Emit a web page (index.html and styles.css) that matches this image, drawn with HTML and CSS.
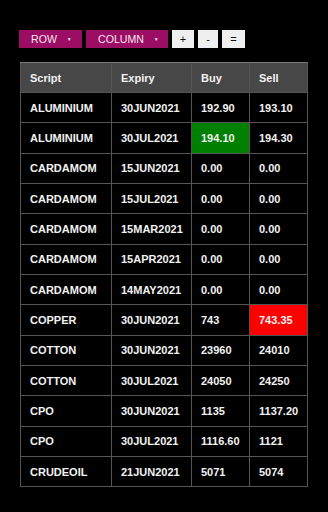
FILE: index.html
```html
<!DOCTYPE html>
<html>
<head>
<meta charset="utf-8">
<link rel="stylesheet" href="styles.css">
</head>
<body>
<div class="page">
  <div class="toolbar">
    <button class="btn btn-menu btn-row">ROW <span class="caret">&#9660;</span></button>
    <button class="btn btn-menu btn-col">COLUMN <span class="caret">&#9660;</span></button>
    <button class="btn btn-small btn-plus">+</button>
    <button class="btn btn-small btn-minus">-</button>
    <button class="btn btn-small btn-eq">=</button>
  </div>
  <table class="grid">
    <colgroup>
      <col class="c1"><col class="c2"><col class="c3"><col class="c4">
    </colgroup>
    <thead>
      <tr><th>Script</th><th>Expiry</th><th>Buy</th><th>Sell</th></tr>
    </thead>
    <tbody>
      <tr><td>ALUMINIUM</td><td>30JUN2021</td><td>192.90</td><td>193.10</td></tr>
      <tr><td>ALUMINIUM</td><td>30JUL2021</td><td class="up">194.10</td><td>194.30</td></tr>
      <tr><td>CARDAMOM</td><td>15JUN2021</td><td>0.00</td><td>0.00</td></tr>
      <tr><td>CARDAMOM</td><td>15JUL2021</td><td>0.00</td><td>0.00</td></tr>
      <tr><td>CARDAMOM</td><td>15MAR2021</td><td>0.00</td><td>0.00</td></tr>
      <tr><td>CARDAMOM</td><td>15APR2021</td><td>0.00</td><td>0.00</td></tr>
      <tr><td>CARDAMOM</td><td>14MAY2021</td><td>0.00</td><td>0.00</td></tr>
      <tr><td>COPPER</td><td>30JUN2021</td><td>743</td><td class="down">743.35</td></tr>
      <tr><td>COTTON</td><td>30JUN2021</td><td>23960</td><td>24010</td></tr>
      <tr><td>COTTON</td><td>30JUL2021</td><td>24050</td><td>24250</td></tr>
      <tr><td>CPO</td><td>30JUN2021</td><td>1135</td><td>1137.20</td></tr>
      <tr><td>CPO</td><td>30JUL2021</td><td>1116.60</td><td>1121</td></tr>
      <tr><td>CRUDEOIL</td><td>21JUN2021</td><td>5071</td><td>5074</td></tr>
    </tbody>
  </table>
</div>
</body>
</html>
```
FILE: styles.css
```css
html, body {
  margin: 0;
  padding: 0;
  background: #000;
}
.page {
  padding: 30px 0 0 19px;
  font-family: "Liberation Sans", Arial, sans-serif;
}
.toolbar {
  display: flex;
  gap: 4px;
  height: 18px;
}
.btn {
  border: 0;
  margin: 0;
  height: 18px;
  font-family: "Liberation Sans", Arial, sans-serif;
  font-size: 10.6px;
  line-height: 18px;
  padding: 0;
  cursor: pointer;
}
.btn-menu {
  background: #9c0d64;
  color: #f4e6ef;
  text-align: left;
  padding-left: 12px;
}
.btn-row { width: 63px; }
.btn-col { width: 82px; }
.caret {
  font-size: 5px;
  vertical-align: 2px;
  margin-left: 7px;
}
.btn-small {
  background: #efefef;
  color: #111;
  font-size: 11px;
  text-align: center;
}
.btn-plus { width: 22px; }
.btn-minus { width: 20px; }
.btn-eq { width: 23px; }
.grid {
  margin: 14px 0 0 1px;
  border-collapse: collapse;
  table-layout: fixed;
  width: 288px;
  color: #f2f2f2;
  font-size: 11px;
  font-weight: bold;
}
.c1 { width: 91px; }
.c2 { width: 80px; }
.c3 { width: 58px; }
.c4 { width: 58px; }
.grid th, .grid td {
  border: 1px solid #555;
  padding: 0 0 0 9px;
  text-align: left;
  white-space: nowrap;
}
.grid thead th {
  background: #474747;
  height: 29px;
  border-top-color: #7a7a7a;
}
.grid tbody td {
  height: 29.33px;
  background: #000;
}
.grid td.up { background: #008000; }
.grid td.down { background: #ff0000; }
```
